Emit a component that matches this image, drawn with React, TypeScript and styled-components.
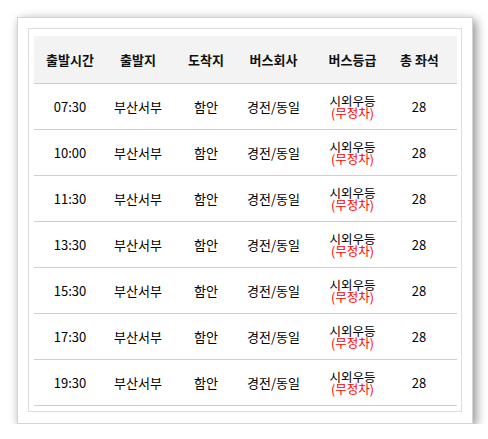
import React from "react";
import styled, { createGlobalStyle } from "styled-components";

const GlobalStyle = createGlobalStyle`
    html, body {
        margin: 0;
        padding: 0;
        background: #fff;
    }
    body {
        font-family: "Noto Sans CJK KR", "Noto Sans", sans-serif;
        color: #000;
    }
`;

const Page = styled.div`
    padding: 17px 0 0 17px;
`;

const Frame = styled.div`
    width: 434px;
    height: 384px;
    box-sizing: content-box;
    border: 1px solid #d4d4d4;
    background: #fff;
    padding: 10px 10px 11px 10px;
    box-shadow: 3px 3px 10px rgba(0, 0, 0, 0.45);
`;

const Inner = styled.div`
    border: 1px solid #dcdcdc;
    padding: 7px 4px 3px 5px;
    height: 384px;
    box-sizing: border-box;
`;

const Table = styled.table`
    width: 423px;
    border-collapse: collapse;
    table-layout: fixed;
`;

const HeadCell = styled.th<{ $w: number; $pr?: number }>`
    width: ${(p) => p.$w}px;
    height: 47px;
    padding: 0 ${(p) => p.$pr ?? 0}px 0 0;
    background: #f3f3f3;
    border-bottom: 1px solid #cccccc;
    font-size: 13px;
    font-weight: 700;
    color: #111;
    text-align: center;
    white-space: nowrap;
`;

const Cell = styled.td<{ $pr?: number }>`
    height: 45px;
    padding: 0 ${(p) => p.$pr ?? 0}px 0 0;
    border-bottom: 1px solid #cfcfcf;
    font-size: 13px;
    text-align: center;
    white-space: nowrap;
    line-height: 14px;
`;

const Grade = styled.div`
    line-height: 12px;
    font-size: 12.5px;
`;

const NoStop = styled.div`
    color: #f00;
    line-height: 12px;
    font-size: 12.5px;
`;

const columns = [
    { label: "출발시간", w: 72 },
    { label: "출발지", w: 64 },
    { label: "도착지", w: 72 },
    { label: "버스회사", w: 63 },
    { label: "버스등급", w: 95 },
    { label: "총 좌석", w: 38, pr: 19 },
];

const times = ["07:30", "10:00", "11:30", "13:30", "15:30", "17:30", "19:30"];

export default function App() {
    return (
        <>
            <GlobalStyle />
            <Page>
                <Frame>
                    <Inner>
                        <Table>
                            <thead>
                                <tr>
                                    {columns.map((c) => (
                                        <HeadCell key={c.label} $w={c.w} $pr={c.pr}>
                                            {c.label}
                                        </HeadCell>
                                    ))}
                                </tr>
                            </thead>
                            <tbody>
                                {times.map((t) => (
                                    <tr key={t}>
                                        <Cell>{t}</Cell>
                                        <Cell>부산서부</Cell>
                                        <Cell>함안</Cell>
                                        <Cell>경전/동일</Cell>
                                        <Cell>
                                            <Grade>시외우등</Grade>
                                            <NoStop>(무정차)</NoStop>
                                        </Cell>
                                        <Cell $pr={19}>28</Cell>
                                    </tr>
                                ))}
                            </tbody>
                        </Table>
                    </Inner>
                </Frame>
            </Page>
        </>
    );
}
